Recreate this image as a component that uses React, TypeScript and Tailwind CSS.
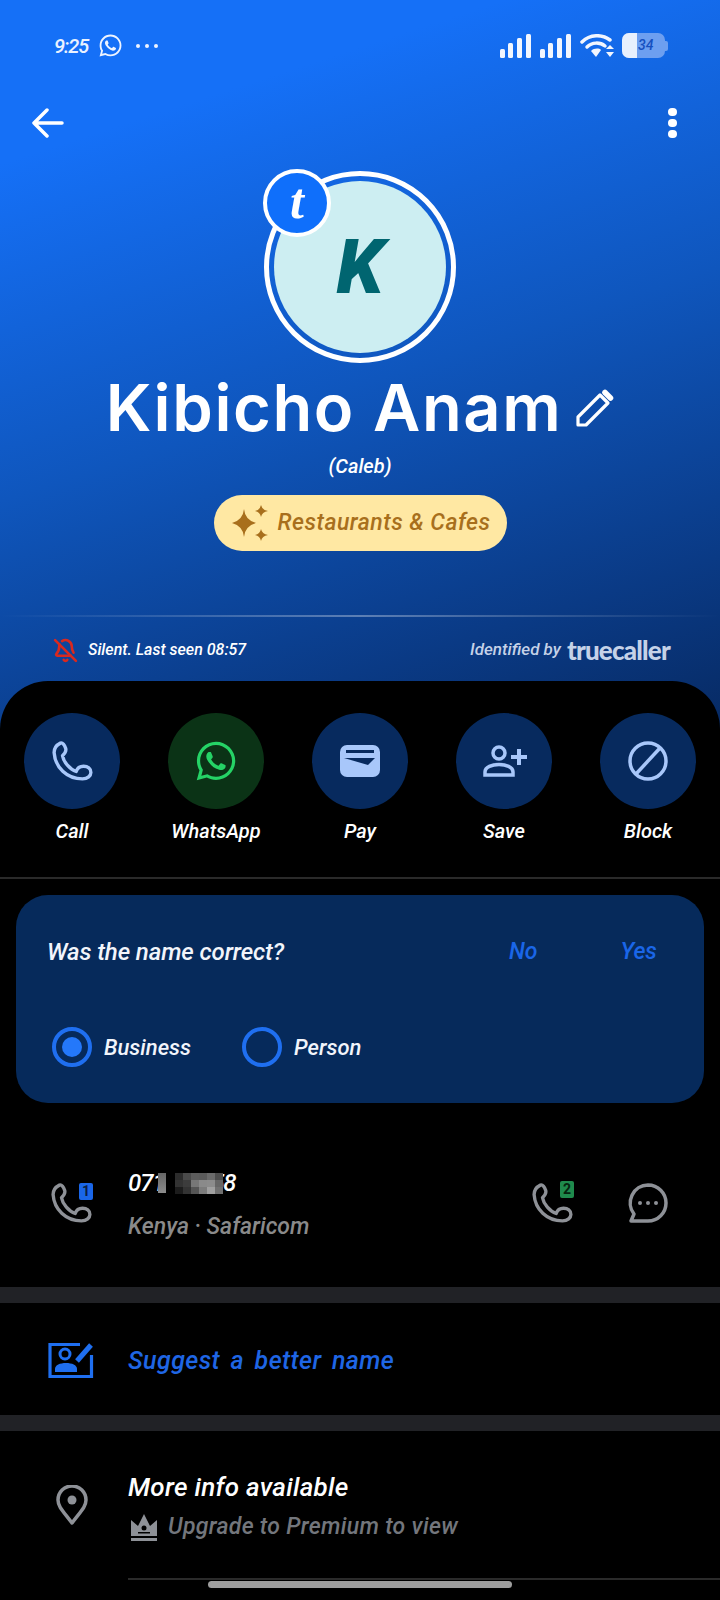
import { FaWhatsapp } from 'react-icons/fa';
import { BellOff } from 'lucide-react';
import type { ReactNode } from 'react';

const PHONE = 'M9 3C5 5 3 8 3 12C4 26 15 37 30 37C35 37 38 34 38 31C38 27 35 25 31 25C28 25 25 27 24 30C18 28 12 21 11 15C13 13 15 11 14 8C13 5 11 2 9 3Z';

function PhoneIcon({ className }: { className: string }) {
  return (
    <svg viewBox="1 1 39 38" fill="none" stroke="currentColor" strokeWidth="3.2" strokeLinejoin="round" className={className}>
      <path d={PHONE} />
    </svg>
  );
}

function CallBadge({ n, className }: { n: string; className: string }) {
  return (
    <div className="relative w-[42px] h-[42px] text-[#8e9197]">
      <PhoneIcon className="w-[41px] h-[40px] mt-[2px]" />
      <span className={`absolute left-[28px] top-0 w-[14px] h-[17px] rounded-[2px] text-[14px] leading-[17px] font-bold text-center not-italic ${className}`}>{n}</span>
    </div>
  );
}

function Signal() {
  return (
    <svg viewBox="0 0 31 24" fill="#f2f6fe" className="w-[31px] h-[24px]">
      <rect x="0" y="15" width="5" height="9" rx="1.5" />
      <rect x="8" y="9" width="5" height="15" rx="1.5" />
      <rect x="17" y="4" width="5" height="20" rx="1.5" />
      <rect x="26" y="0" width="5" height="24" rx="1.5" />
    </svg>
  );
}

function Action({ label, icon, green }: { label: string; icon: ReactNode; green?: boolean }) {
  return (
    <div className="w-[144px] flex flex-col items-center">
      <div className={`w-[96px] h-[96px] rounded-full flex items-center justify-center ${green ? 'bg-[#0b3316]' : 'bg-[#072a5e]'}`}>{icon}</div>
      <span className="mt-[8px] text-[20px] leading-[28px] font-medium text-white">{label}</span>
    </div>
  );
}

const MOSAIC = [
  ['#2c2c2c', '#4a4a4a', '#5c5c5c', '#5a5a5a', '#6a6a6a', '#4c4c4c'],
  ['#333333', '#3c3c3c', '#777777', '#8a8a8a', '#8c8c8c', '#666666'],
  ['#1c1c1c', '#333333', '#555555', '#7c7c7c', '#a0a0a0', '#707070'],
];

export default function App() {
  return (
    <div className="w-[720px] h-[1600px] bg-black overflow-hidden font-['Roboto',sans-serif] italic">
      <div className="h-[730px] -mb-[49px] flex flex-col bg-[linear-gradient(162deg,#1570f7_0%,#1570f7_17%,#0f56bd_52%,#0a3a85_82%,#072a63_100%)] text-white">
        {/* status bar */}
        <div className="pt-[33px] pl-[54px] pr-[52px] flex items-center justify-between">
          <div className="flex items-center h-[24px]">
            <span className="text-[20px] font-medium w-[34px] tracking-[-1px] text-[#eaf2ff]">9:25</span>
            <FaWhatsapp className="ml-[10px] w-[25px] h-[25px] text-[#eef4ff]" />
            <div className="ml-[13px] flex gap-[5px]">
              <span className="w-[4px] h-[4px] rounded-full bg-[#eef4ff]" />
              <span className="w-[4px] h-[4px] rounded-full bg-[#eef4ff]" />
              <span className="w-[4px] h-[4px] rounded-full bg-[#eef4ff]" />
            </div>
          </div>
          <div className="flex items-center">
            <Signal />
            <div className="ml-[9px]"><Signal /></div>
            <svg viewBox="0 0 34 24" fill="none" className="ml-[9px] w-[34px] h-[24px]">
              <path d="M2 8C10 0 22 0 30 6" stroke="#f2f6fe" strokeWidth="3.5" strokeLinecap="round" />
              <path d="M7 13C12 8 20 8 25 12" stroke="#f2f6fe" strokeWidth="3.5" strokeLinecap="round" />
              <path d="M11 17C14 14 19 14 21 16L16 23Z" fill="#f2f6fe" />
              <path d="M30 11L34 15H26Z M30 23L26 18H34Z" fill="#f2f6fe" />
            </svg>
            <div className="ml-[8px] flex items-center">
              <div className="relative w-[43px] h-[25px] rounded-[7px] bg-[#6d9ff0] overflow-hidden flex">
                <div className="w-[15px] bg-[#e8f0fd]" />
                <span className="ml-[1px] text-[14px] leading-[25px] font-medium text-[#1550c0]">34</span>
              </div>
              <div className="w-[3px] h-[10px] rounded-r-[2px] bg-[#6d9ff0]" />
            </div>
          </div>
        </div>

        {/* nav */}
        <div className="mt-[50px] pl-[32px] pr-[43px] flex items-center justify-between h-[30px]">
          <svg viewBox="0 0 32 30" fill="none" stroke="white" strokeWidth="3.5" strokeLinecap="round" strokeLinejoin="round" className="w-[32px] h-[30px]">
            <path d="M15 2L2 15L15 28M2 15H30" />
          </svg>
          <div className="flex flex-col gap-[3px]">
            <span className="w-[9px] h-[8px] rounded-full bg-white" />
            <span className="w-[9px] h-[8px] rounded-full bg-white" />
            <span className="w-[9px] h-[8px] rounded-full bg-white" />
          </div>
        </div>

        {/* avatar */}
        <div className="relative mt-[33px] self-center w-[192px] h-[192px] rounded-full border-[5px] border-white p-[5px]">
          <div className="w-full h-full rounded-full bg-[#cdeef2] flex items-center justify-center">
            <span className="text-[76px] leading-none font-black text-[#006570]">K</span>
          </div>
          <div className="absolute -left-[6px] -top-[7px] w-[68px] h-[68px] rounded-full border-[4px] border-white bg-[#0f6ffb] flex items-center justify-center">
            <span className="text-[50px] leading-none font-black text-white font-['Liberation_Serif',serif] -mt-[4px]">t</span>
          </div>
        </div>

        {/* name */}
        <div className="mt-[12px] flex items-center justify-center h-[66px] not-italic">
          <span className="text-[65px] leading-[66px] font-semibold font-['Inter',sans-serif] tracking-[1.6px] whitespace-nowrap">Kibicho Anam</span>
          <svg viewBox="0 0 38 38" fill="none" stroke="white" strokeWidth="3.2" strokeLinejoin="round" className="ml-[14px] w-[38px] h-[38px]">
            <path d="M2 36V28L24 6L32 14L10 36Z" />
            <path d="M29 3.5L34.5 9" strokeWidth="5.5" strokeLinecap="round" />
          </svg>
        </div>
        <div className="mt-[11px] text-center text-[20px] leading-[28px] font-medium">(Caleb)</div>

        {/* category */}
        <div className="mt-[15px] self-center w-[293px] h-[56px] rounded-full bg-[#ffe8a3] flex items-center pl-[18px]">
          <svg viewBox="0 0 36 36" fill="#a86f1c" className="w-[36px] h-[36px]">
            <path d="M12 4Q13 15 24 18Q13 21 12 32Q11 21 0 18Q11 15 12 4Z" />
            <path d="M29 0Q30 5 36 6Q30 7 29 12Q28 7 23 6Q28 5 29 0Z" />
            <path d="M29 24Q30 29 36 30Q30 31 29 36Q28 31 23 30Q28 29 29 24Z" />
          </svg>
          <span className="ml-[10px] text-[23px] font-medium text-[#a86f1c] tracking-[0.5px] whitespace-nowrap">Restaurants &amp; Cafes</span>
        </div>

        {/* caller info */}
        <div className="mt-[64px] h-[2px] bg-[linear-gradient(90deg,#ffffff00,#ffffff55_50%,#ffffff00)]" />
        <div className="mt-[20px] pl-[53px] pr-[50px] flex items-center justify-between h-[26px]">
          <div className="flex items-center">
            <BellOff className="w-[25px] h-[25px] text-[#d9291f]" strokeWidth={2.5} />
            <span className="ml-[10px] text-[16px] font-medium whitespace-nowrap">Silent. Last seen 08:57</span>
          </div>
          <div className="flex items-center text-[#c5d2e8]">
            <span className="text-[17px] font-medium">Identified by</span>
            <span className="ml-[6px] text-[26px] leading-[26px] font-black not-italic font-['Lato',sans-serif] tracking-[-0.8px]">truecaller</span>
          </div>
        </div>
      </div>

      {/* sheet */}
      <div className="relative rounded-t-[48px] bg-black">
        <div className="pt-[32px] flex">
          <Action label="Call" icon={<PhoneIcon className="w-[41px] h-[40px] text-[#a8c7fa]" />} />
          <Action label="WhatsApp" green icon={<FaWhatsapp className="w-[44px] h-[44px] text-[#25d366]" />} />
          <Action label="Pay" icon={
            <svg viewBox="0 0 40 32" className="w-[40px] h-[32px]">
              <rect width="40" height="32" rx="7" fill="#a8c7fa" />
              <path d="M6 5H34V8H6Z" fill="#072a5e" />
              <path d="M4 13H35L28 20Z" fill="#072a5e" />
            </svg>
          } />
          <Action label="Save" icon={
            <svg viewBox="0 0 44 32" fill="none" stroke="#a8c7fa" strokeWidth="3.5" className="w-[44px] h-[32px] ml-[2px]">
              <circle cx="16" cy="8" r="6" />
              <path d="M2 30V27C2 22 9 19.5 16 19.5C23 19.5 30 22 30 27V30Z" />
              <path d="M36 4V20M28 12H44" strokeWidth="4" />
            </svg>
          } />
          <Action label="Block" icon={
            <svg viewBox="0 0 40 40" fill="none" stroke="#a8c7fa" strokeWidth="3.5" className="w-[40px] h-[40px]">
              <circle cx="20" cy="20" r="18" />
              <path d="M8 33L32 7" />
            </svg>
          } />
        </div>

        <div className="mt-[32px] h-[2px] bg-[#2a2a2a]" />

        {/* name check */}
        <div className="mx-[16px] mt-[16px] h-[208px] rounded-[32px] bg-[#062a5b] flex flex-col">
          <div className="mt-[42px] pl-[31px] flex items-center h-[30px] text-[24px] font-medium">
            <span className="text-[#f2f5fb] w-[462px] tracking-[-0.1px] whitespace-nowrap">Was the name correct?</span>
            <span className="text-[23px] text-[#1a66e8]">No</span>
            <span className="ml-[83px] text-[23px] text-[#1a66e8]">Yes</span>
          </div>
          <div className="mt-[60px] pl-[36px] flex items-center text-[22px] font-medium text-[#f2f5fb]">
            <div className="w-[40px] h-[40px] rounded-full border-[4px] border-[#1f6ff0] flex items-center justify-center">
              <div className="w-[20px] h-[20px] rounded-full bg-[#2478fa]" />
            </div>
            <span className="ml-[12px] w-[138px]">Business</span>
            <div className="w-[40px] h-[40px] rounded-full border-[4px] border-[#1f6ff0]" />
            <span className="ml-[12px]">Person</span>
          </div>
        </div>

        {/* number, the mosaic sits over the hidden digits */}
        <div className="mt-[70px] h-[114px] relative flex">
          <div className="pl-[51px] w-[128px] pt-[8px]">
            <CallBadge n="1" className="bg-[#1a66e8] text-[#0a1f45]" />
          </div>
          <div className="flex flex-col">
            <div className="flex items-center h-[20px] text-[24px] font-medium text-white whitespace-nowrap">
              <span className="w-[30px] tracking-[-1px]">071</span>
              <div className="relative z-10 w-[8px] h-[20px] bg-[linear-gradient(180deg,#666666,#8c8c8c)]" />
              <div className="relative z-10 ml-[9px] w-[48px] grid grid-cols-6">
                {MOSAIC.flat().map((c, i) => (
                  <div key={i} className="h-[7px]" style={{ backgroundColor: c }} />
                ))}
              </div>
              <span className="-ml-[12px] tracking-[-1px]">58</span>
            </div>
            <span className="mt-[19px] text-[23px] leading-[30px] font-medium text-[#8a8a8a] whitespace-nowrap">Kenya · Safaricom</span>
          </div>
          <div className="ml-auto flex pt-[8px] pr-[52px]">
            <CallBadge n="2" className="bg-[#1f8a4c] text-[#06240f]" />
            <svg viewBox="0 0 40 40" className="ml-[54px] mt-[2px] w-[40px] h-[40px]">
              <path d="M20 2A18 18 0 0 1 20 38H3L6 31A18 18 0 0 1 20 2Z" fill="none" stroke="#8e9197" strokeWidth="3.5" strokeLinejoin="round" />
              <circle cx="12" cy="20" r="2" fill="#8e9197" />
              <circle cx="20" cy="20" r="2" fill="#8e9197" />
              <circle cx="28" cy="20" r="2" fill="#8e9197" />
            </svg>
          </div>
        </div>
        <div className="h-[16px] bg-[#212226]" />

        {/* suggest */}
        <div className="h-[112px] flex items-center pl-[48px]">
          <svg viewBox="0 0 47 37" fill="none" className="w-[47px] h-[37px]">
            <path d="M32 3.5H2V35.5H43.5V14" stroke="#1f6ff0" strokeWidth="3.2" />
            <circle cx="17" cy="13" r="5" stroke="#1f6ff0" strokeWidth="3" />
            <path d="M7 31V28C7 24 12 22 18 22C24 22 29 24 29 28V31Z" fill="#1f6ff0" />
            <path d="M29 20L43 4" stroke="#1f6ff0" strokeWidth="5" />
          </svg>
          <span className="ml-[33px] mt-[4px] text-[25px] font-medium text-[#1f66e5] tracking-[0.4px] [word-spacing:4px] whitespace-nowrap">Suggest a better name</span>
        </div>
        <div className="h-[16px] bg-[#212226]" />

        {/* more info */}
        <div className="flex">
          <div className="w-[128px] pl-[56px] pt-[54px]">
            <svg viewBox="0 0 32 40" className="w-[32px] h-[40px]">
              <path d="M16 38C8 27 2 22 2 15A14 14 0 0 1 30 15C30 22 24 27 16 38Z" fill="none" stroke="#8e9197" strokeWidth="3.5" strokeLinejoin="round" />
              <circle cx="16" cy="15" r="4.5" fill="#8e9197" />
            </svg>
          </div>
          <div className="flex-1 flex flex-col">
            <span className="mt-[40px] text-[26px] leading-[32px] font-medium text-white tracking-[0.3px]">More info available</span>
            <div className="mt-[10px] flex items-center h-[28px] pl-[3px]">
              <svg viewBox="0 0 26 27" className="w-[26px] h-[27px]">
                <path d="M0 6L7 12L13 0L19 12L26 6V22H0Z" fill="#8e9197" />
                <circle cx="13" cy="14" r="2.5" fill="#000" />
                <rect x="7" y="18" width="12" height="1.5" fill="#000" />
                <rect y="24" width="26" height="3" fill="#8e9197" />
              </svg>
              <span className="ml-[11px] text-[23px] font-medium text-[#73767c] tracking-[0.3px] whitespace-nowrap">Upgrade to Premium to view</span>
            </div>
            <div className="mt-[37px] h-[2px] bg-[#2a2a2a]" />
          </div>
        </div>
      </div>

      {/* gesture bar */}
      <div className="mx-auto mt-[1px] w-[304px] h-[7px] rounded-full bg-[#9e9e9e]" />
    </div>
  );
}
